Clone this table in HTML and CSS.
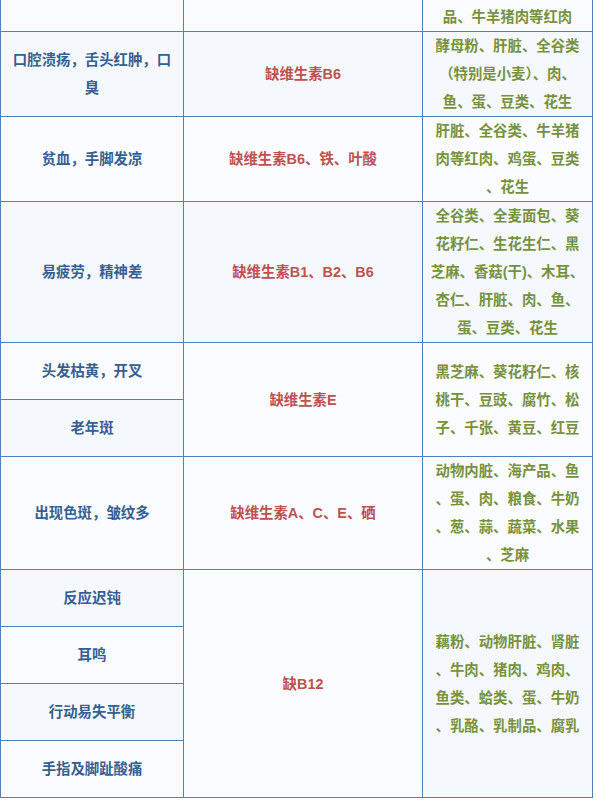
FILE: index.html
```html
<!DOCTYPE html>
<html lang="zh-CN">
<head>
<meta charset="utf-8">
<title>维生素缺乏表</title>
<link rel="stylesheet" href="styles.css">
</head>
<body>
<table class="vt">
  <colgroup>
    <col class="c1">
    <col class="c2">
    <col class="c3">
  </colgroup>
  <tr class="top">
    <td class="sym lt"></td>
    <td class="vit lt"></td>
    <td class="food lt first">品、牛羊猪肉等红肉</td>
  </tr>
  <tr>
    <td class="sym bl">口腔溃疡，舌头红肿，口<br>臭</td>
    <td class="vit bl">缺维生素B6</td>
    <td class="food bl">酵母粉、肝脏、全谷类<br>（特别是小麦）、肉、<br>鱼、蛋、豆类、花生</td>
  </tr>
  <tr>
    <td class="sym lt">贫血，手脚发凉</td>
    <td class="vit lt">缺维生素B6、铁、叶酸</td>
    <td class="food lt">肝脏、全谷类、牛羊猪<br>肉等红肉、鸡蛋、豆类<br>、花生</td>
  </tr>
  <tr>
    <td class="sym bl">易疲劳，精神差</td>
    <td class="vit bl">缺维生素B1、B2、B6</td>
    <td class="food bl">全谷类、全麦面包、葵<br>花籽仁、生花生仁、黑<br>芝麻、香菇(干)、木耳、<br>杏仁、肝脏、肉、鱼、<br>蛋、豆类、花生</td>
  </tr>
  <tr>
    <td class="sym lt">头发枯黄，开叉</td>
    <td class="vit lt" rowspan="2">缺维生素E</td>
    <td class="food lt" rowspan="2">黑芝麻、葵花籽仁、核<br>桃干、豆豉、腐竹、松<br>子、千张、黄豆、红豆</td>
  </tr>
  <tr>
    <td class="sym bl">老年斑</td>
  </tr>
  <tr>
    <td class="sym lt">出现色斑，皱纹多</td>
    <td class="vit lt">缺维生素A、C、E、硒</td>
    <td class="food lt">动物内脏、海产品、鱼<br>、蛋、肉、粮食、牛奶<br>、葱、蒜、蔬菜、水果<br>、芝麻</td>
  </tr>
  <tr>
    <td class="sym bl">反应迟钝</td>
    <td class="vit lt" rowspan="4">缺B12</td>
    <td class="food bl" rowspan="4">藕粉、动物肝脏、肾脏<br>、牛肉、猪肉、鸡肉、<br>鱼类、蛤类、蛋、牛奶<br>、乳酪、乳制品、腐乳</td>
  </tr>
  <tr>
    <td class="sym lt">耳鸣</td>
  </tr>
  <tr>
    <td class="sym bl">行动易失平衡</td>
  </tr>
  <tr>
    <td class="sym lt">手指及脚趾酸痛</td>
  </tr>
</table>
</body>
</html>
```

FILE: styles.css
```css
html, body {
  margin: 0;
  padding: 0;
  background: #ffffff;
}

.vt {
  border-collapse: collapse;
  table-layout: fixed;
  width: 592px;
  font-family: "Liberation Sans", "Noto Sans CJK SC", sans-serif;
  font-size: 14.4px;
  font-weight: bold;
  line-height: 28px;
}

.c1 { width: 183px; }
.c2 { width: 239px; }
.c3 { width: 170px; }

.vt td {
  border: 1px solid #4f81bd;
  text-align: center;
  vertical-align: middle;
  white-space: nowrap;
  padding: 0;
}

.vt .top td {
  border-top: none;
}

.vt .sym {
  color: #365f91;
  padding: 14px 8px;
}

.vt .vit {
  color: #c0504d;
  padding: 14px 8px;
}

.vt .food {
  color: #76923c;
  padding: 0 4px;
}

.vt .first {
  padding-top: 3px;
}

.vt .top .sym,
.vt .top .vit {
  padding: 0;
}

.bl { background: #f5f9fe; }
.lt { background: #fbfcff; }
```
